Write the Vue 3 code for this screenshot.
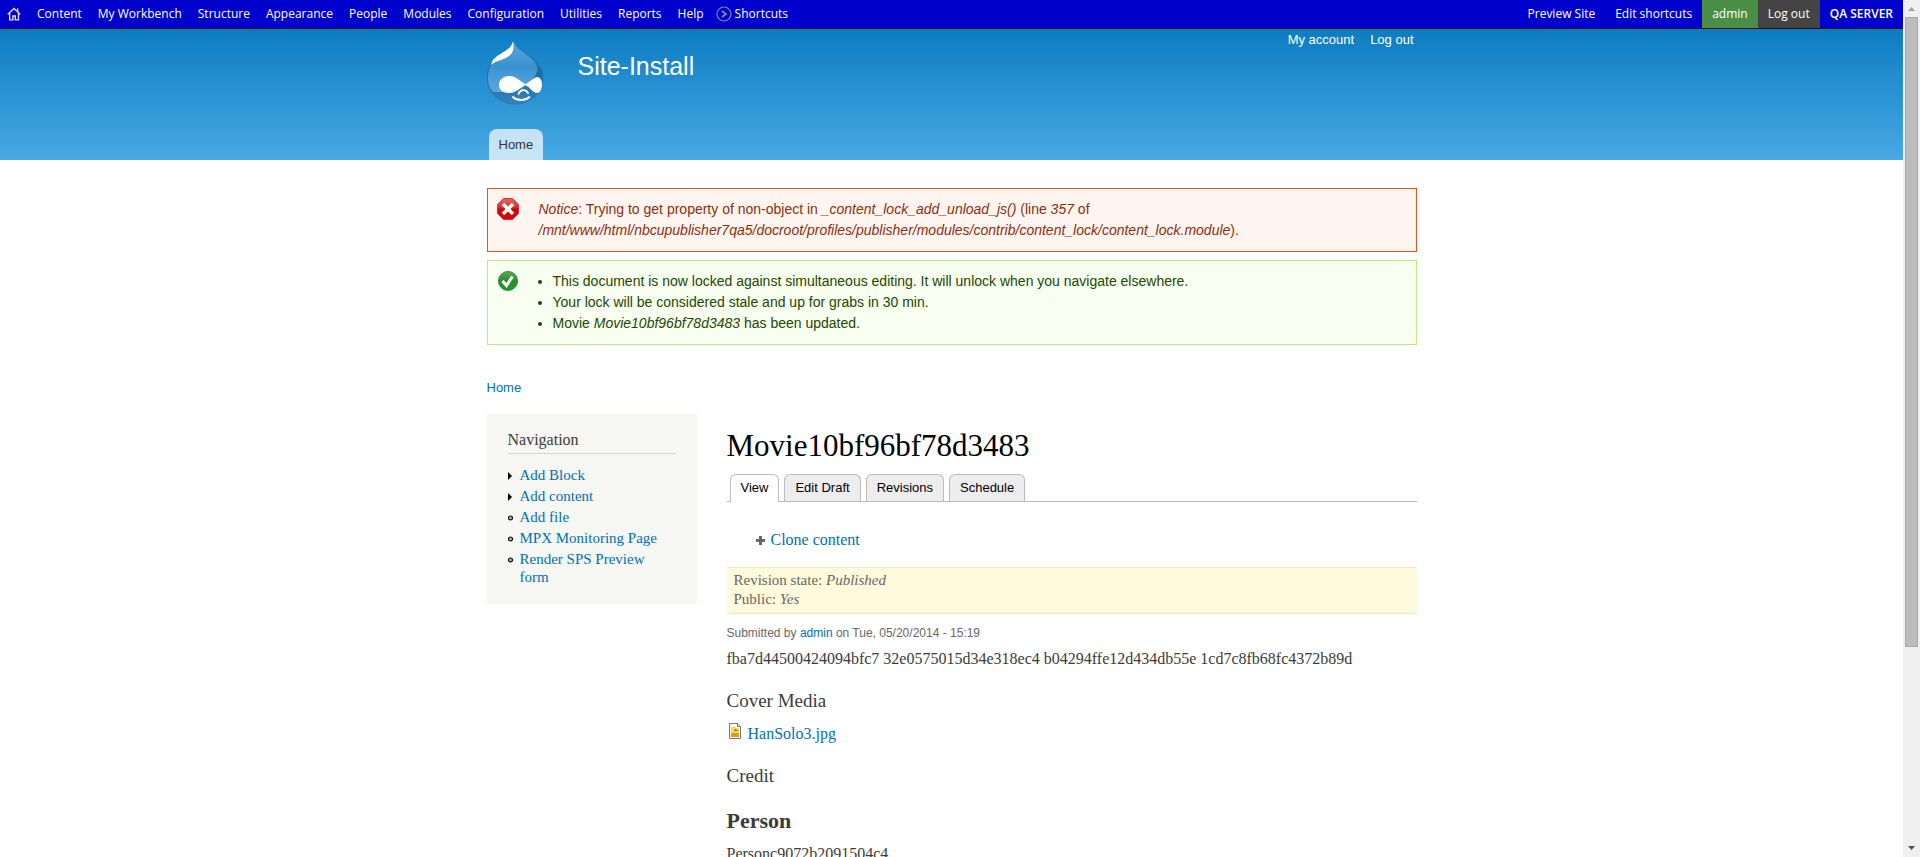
<script setup>
const menu = ['Content', 'My Workbench', 'Structure', 'Appearance', 'People', 'Modules', 'Configuration', 'Utilities', 'Reports', 'Help']
const tabs = ['View', 'Edit Draft', 'Revisions', 'Schedule']
const navigation = [
  { label: 'Add Block', parent: true },
  { label: 'Add content', parent: true },
  { label: 'Add file' },
  { label: 'MPX Monitoring Page' },
  { label: 'Render SPS Preview form' }
]
const visibleShare = 76.5
</script>

<template>
  <div class="window">
    <div class="page">
      <nav class="toolbar" aria-label="Administration">
        <a class="home" href="#" aria-label="Home">
          <svg width="14" height="14" viewBox="0 0 14 14" fill="none" stroke="#dcdcf8" stroke-width="1.4">
            <path d="M.8 7.2 7 1.4l6.200 5.800M2.700 6v6.900h3.200V9h2.400v3.900h3.200V6M10.700 4.500V1.500" />
          </svg>
        </a>
        <a v-for="item in menu" :key="item" href="#">{{ item }}</a>
        <a class="shortcuts" href="#">
          <svg width="16" height="16" viewBox="0 0 16 16" fill="none" stroke="#8585a8">
            <circle cx="8" cy="8" r="7" stroke-width="1.2" />
            <path d="m6 5 4 3-4 3" stroke-width="1.800" />
          </svg>
          Shortcuts
        </a>
        <div class="account">
          <a href="#">Preview Site</a>
          <a href="#">Edit shortcuts</a>
          <a class="user" href="#">admin</a>
          <a class="logout" href="#">Log out</a>
          <strong>QA SERVER</strong>
        </div>
      </nav>

      <header class="header">
        <div class="wrap header-inner">
          <a class="logo" href="#" aria-label="Site home">
            <svg width="57" height="66" viewBox="1 0 57 66">
              <defs>
                <linearGradient id="drop" x1="0" y1="0" x2="0" y2="1">
                  <stop offset="0" stop-color="#59a5d8" />
                  <stop offset=".5" stop-color="#3a93cf" />
                  <stop offset="1" stop-color="#5aa9dd" />
                </linearGradient>
                <linearGradient id="shade" x1="0" y1="0" x2="0" y2="1">
                  <stop offset="0" stop-color="#2f86c3" />
                  <stop offset=".55" stop-color="#1d6ba6" />
                  <stop offset="1" stop-color="#3583bd" />
                </linearGradient>
              </defs>
              <path d="M27.500 1C29.500 9 35 12 42 16c10 6 15 13 15 22 0 16-12 27-28 27S1 53 1 38C1 27 6 21 14 16c7-4 13-8 13.500-15Z" fill="url(#shade)" stroke="#2878b1" />
              <path d="M27.500 2C30 11 42 15 48 22c4 5 4 10 1 15-5 9-15 16-31 16H7C3 48 2 44 2 38c0-10 5-16 13-21 7-4 12-8 12.500-15Z" fill="url(#drop)" />
              <path d="M27 2c1 9 0 12-4 15-5 4-12 4-18 9C6 20 11 17 16 14c5-3 10-6 11-12Z" fill="#fff" />
              <path d="M13 46c0-5 4-9 10-9 7 0 11 5 16 8 5-2 8-6 12-7 3 0 5 3 5 7 0 5-2 9-5 9-4 0-7-6-12-8-5 3-9 8-16 8-6 0-10-3-10-8Z" fill="#fff" />
              <path d="M32.500 55c2-5 7-5 9.500-1M27 58c4 4 12 4 16.500 0" fill="none" stroke="#fff" stroke-width="1.800" stroke-linecap="round" />
            </svg>
          </a>
          <a class="site-name" href="#">Site-Install</a>
          <nav class="user-links" aria-label="Account">
            <a href="#">My account</a>
            <a href="#">Log out</a>
          </nav>
        </div>
        <div class="wrap main-menu"><a href="#">Home</a></div>
      </header>

      <div class="wrap messages">
        <section class="message error">
          <svg class="message-icon" width="22" height="22" viewBox="0 0 22 22">
            <defs>
              <linearGradient id="red" x1="0" y1="0" x2="0" y2="1">
                <stop offset="0" stop-color="#e56a6a" />
                <stop offset=".45" stop-color="#d42a2a" />
                <stop offset=".5" stop-color="#d00000" />
                <stop offset="1" stop-color="#e00505" />
              </linearGradient>
            </defs>
            <path d="M6.500.500h9l6 6v9l-6 6h-9l-6-6v-9Z" fill="url(#red)" stroke="#d33" />
            <path d="m6 6 10 10M16 6 6 16" stroke="#fff" stroke-width="3.600" />
          </svg>
          <p>
            <em>Notice</em>: Trying to get property of non-object in <em>_content_lock_add_unload_js()</em> (line <em>357</em> of
            <em>/mnt/www/html/nbcupublisher7qa5/docroot/profiles/publisher/modules/contrib/content_lock/content_lock.module</em>).
          </p>
        </section>
        <section class="message status">
          <svg class="message-icon" width="22" height="22" viewBox="0 0 22 22">
            <defs>
              <linearGradient id="green" x1="0" y1="0" x2="0" y2="1">
                <stop offset="0" stop-color="#5cab5c" />
                <stop offset=".5" stop-color="#2c8a2f" />
                <stop offset="1" stop-color="#279a2a" />
              </linearGradient>
            </defs>
            <circle cx="11" cy="11" r="9.500" fill="url(#green)" stroke="#2b8a3a" />
            <path d="m5.500 11 4 4.500 6-9" fill="none" stroke="#fff" stroke-width="3" />
          </svg>
          <ul>
            <li>This document is now locked against simultaneous editing. It will unlock when you navigate elsewhere.</li>
            <li>Your lock will be considered stale and up for grabs in 30 min.</li>
            <li>Movie <em>Movie10bf96bf78d3483</em> has been updated.</li>
          </ul>
        </section>
      </div>

      <nav class="wrap breadcrumb" aria-label="Breadcrumb"><a href="#">Home</a></nav>

      <div class="wrap columns">
        <aside class="sidebar">
          <h2>Navigation</h2>
          <ul>
            <li v-for="item in navigation" :key="item.label">
              <svg width="6" height="8" viewBox="0 0 6 8">
                <path v-if="item.parent" d="M0 0v8l4-4Z" fill="#000" />
                <circle v-else cx="2.500" cy="4" r="2" fill="#bbb" stroke="#000" stroke-width="1.200" />
              </svg>
              <a href="#">{{ item.label }}</a>
            </li>
          </ul>
        </aside>

        <main class="content">
          <h1>Movie10bf96bf78d3483</h1>
          <nav class="tabs" aria-label="Tabs">
            <a v-for="(tab, i) in tabs" :key="tab" href="#" :class="{ active: i === 0 }">{{ tab }}</a>
          </nav>
          <div class="actions">
            <svg width="9" height="9" viewBox="0 0 9 9"><path d="M3 0h3v3h3v3H6v3H3V6H0V3h3Z" fill="#666" /></svg>
            <a href="#">Clone content</a>
          </div>
          <div class="revision">
            <div>Revision state: <em>Published</em></div>
            <div>Public: <em>Yes</em></div>
          </div>
          <p class="submitted">Submitted by <a href="#">admin</a> on Tue, 05/20/2014 - 15:19</p>
          <p class="body">fba7d44500424094bfc7 32e0575015d34e318ec4 b04294ffe12d434db55e 1cd7c8fb68fc4372b89d</p>
          <h2>Cover Media</h2>
          <div class="file">
            <svg width="16" height="16" viewBox="0 0 16 16">
              <path d="M2.500.500h8l3 3v12h-11Z" fill="#fff" stroke="#777" />
              <path d="M10.500.500v3h3" fill="#ddd" stroke="#777" />
              <path d="M4 4h5v1h3v5H4Z" fill="#f5dc4a" />
              <path d="M4 10h8v4H4Z" fill="#dc9a1f" />
              <path d="M4 8h3l1-2 2 1 2 1H4Z" fill="#8a7a14" />
            </svg>
            <a href="#">HanSolo3.jpg</a>
          </div>
          <h2>Credit</h2>
          <h3>Person</h3>
          <p class="body person">Personc9072b2091504c4</p>
        </main>
      </div>
    </div>

    <div class="scrollbar" aria-hidden="true">
      <svg width="17" height="17" viewBox="0 0 17 17"><path d="M5 11h7L8.500 7Z" fill="#a0a0a0" /></svg>
      <div class="track"><div class="thumb" :style="{ height: visibleShare + '%' }"></div></div>
      <svg width="17" height="17" viewBox="0 0 17 17"><path d="M5 6h7l-3.500 4Z" fill="#505050" /></svg>
    </div>
  </div>
</template>

<style>
body {
  background: #fff;
}
</style>

<style scoped>
.window {
  display: flex;
  height: 100vh;
  overflow: hidden;
  color: #3b3b3b;
  font-family: Georgia, "Liberation Serif", serif;
  font-size: 16px;
}
.page {
  flex: 1;
  min-width: 0;
  overflow: hidden;
}
svg {
  display: block;
  flex: none;
}
a {
  color: #0071b3;
  text-decoration: none;
}
h1, h2, h3, p, ul {
  margin: 0;
  padding: 0;
  font-weight: 400;
}
ul {
  list-style: none;
}
.wrap {
  max-width: 930px;
  margin: 0 auto;
}

.toolbar {
  display: flex;
  height: 28px;
  border-bottom: 1px solid #111;
  background: #0000cd;
  font: 12px/28px "Open Sans", sans-serif;
  color: #fff;
}
.toolbar a {
  padding: 0 8px;
  color: #fff;
  white-space: nowrap;
}
.toolbar .home {
  display: flex;
  align-items: center;
  padding: 0 8px 0 7px;
}
.toolbar .shortcuts {
  display: flex;
  align-items: center;
  gap: 3px;
  padding: 0 4px;
}
.account {
  display: flex;
  margin-left: auto;
}
.toolbar .account a,
.account strong {
  padding: 0 10px;
}
.account strong {
  font-weight: 600;
}
.toolbar .user {
  background: #4b8f47;
}
.toolbar .logout {
  background: #444;
}

.header {
  background: linear-gradient(#0c7cc1, #48a9e4);
  font-family: "Liberation Sans", sans-serif;
}
.header a {
  color: #fffeff;
}
.header-inner {
  display: flex;
  align-items: flex-start;
  height: 100px;
}
.logo {
  padding-top: 10px;
}
.site-name {
  padding: 22px 0 0 34px;
  font-size: 25px;
  line-height: 30px;
}
.user-links {
  display: flex;
  gap: 16px;
  margin-left: auto;
  padding: 1px 3px 0 0;
  font-size: 13px;
  line-height: 20px;
}
.main-menu {
  display: flex;
  padding-left: 2px;
  box-sizing: border-box;
}
.header .main-menu a {
  padding: 0 10px;
  border-radius: 8px 8px 0 0;
  background: rgba(255, 255, 255, .7);
  color: #333;
  font-size: 13px;
  line-height: 31px;
}

.messages {
  display: grid;
  gap: 8px;
  padding-top: 28px;
}
.message {
  display: flex;
  align-items: flex-start;
  gap: 20px;
  padding: 9px;
  border: 1px solid;
  font: 14px/21px "Liberation Sans", sans-serif;
}
.message p,
.message ul {
  padding: 1px 0;
}
.message p {
  max-width: 760px;
}
.error {
  border-color: #ed541d;
  background: #fef5f1;
  color: #8c2e0b;
}
.status {
  border-color: #be7;
  background: #f8fff0;
  color: #234600;
}
.message ul {
  list-style: disc;
  padding-left: 14px;
}

.breadcrumb {
  padding: 33px 0 16px;
  font: 13px/20px "Liberation Sans", sans-serif;
}

.columns {
  display: flex;
  align-items: flex-start;
  gap: 30px;
}
.sidebar {
  box-sizing: border-box;
  width: 210px;
  padding: 16px 21px 18px;
  background: #f6f6f2;
  font-size: 15px;
  line-height: 18px;
}
.sidebar h2 {
  padding-bottom: 3px;
  border-bottom: 1px solid #d6d6d6;
  font-size: 16px;
  line-height: 20px;
}
.sidebar ul {
  display: grid;
  gap: 3px;
  padding-top: 12px;
}
.sidebar li {
  display: flex;
  gap: 6px;
}
.sidebar li svg {
  margin-top: 6px;
}

.content {
  flex: 1;
  min-width: 0;
}
.content h1 {
  padding: 14px 0 11px;
  color: #000;
  font-size: 31px;
  line-height: 35px;
}
.tabs {
  display: flex;
  gap: 5px;
  padding-left: 3px;
  border-bottom: 1px solid #bbb;
  font: 13px/26px "Liberation Sans", sans-serif;
}
.tabs a {
  padding: 0 10px;
  border: 1px solid #bbb;
  border-bottom: 0;
  border-radius: 6px 6px 0 0;
  background: #ededed;
  color: #000;
}
.tabs .active {
  margin-bottom: -1px;
  padding-bottom: 1px;
  background: #fff;
}
.actions {
  display: flex;
  align-items: center;
  gap: 6px;
  padding: 28px 29px 17px;
  line-height: 20px;
}
.revision {
  padding: 3px 7px 4px;
  border: solid #fbe8bd;
  border-width: 1px 0;
  background: #fffadb;
  color: #666;
  font-size: 15px;
  line-height: 19px;
}
.submitted {
  padding-top: 9px;
  color: #686868;
  font: 12px/20px "Liberation Sans", sans-serif;
}
.body {
  padding-top: 6px;
  line-height: 20px;
}
.content h2 {
  padding-top: 20px;
  font-size: 19px;
  line-height: 24px;
}
.file {
  display: flex;
  gap: 5px;
  padding-top: 10px;
  line-height: 21px;
}
.content h3 {
  padding-top: 20px;
  font-size: 22px;
  font-weight: 700;
  line-height: 26px;
}
.person {
  padding-top: 10px;
}

.scrollbar {
  display: flex;
  flex-direction: column;
  width: 17px;
  background: #f0f0f0;
}
.track {
  flex: 1;
  padding: 0 2px;
}
.thumb {
  box-sizing: border-box;
  border: 1px solid #a8a8a8;
  background: #bcbcbc;
}
</style>
